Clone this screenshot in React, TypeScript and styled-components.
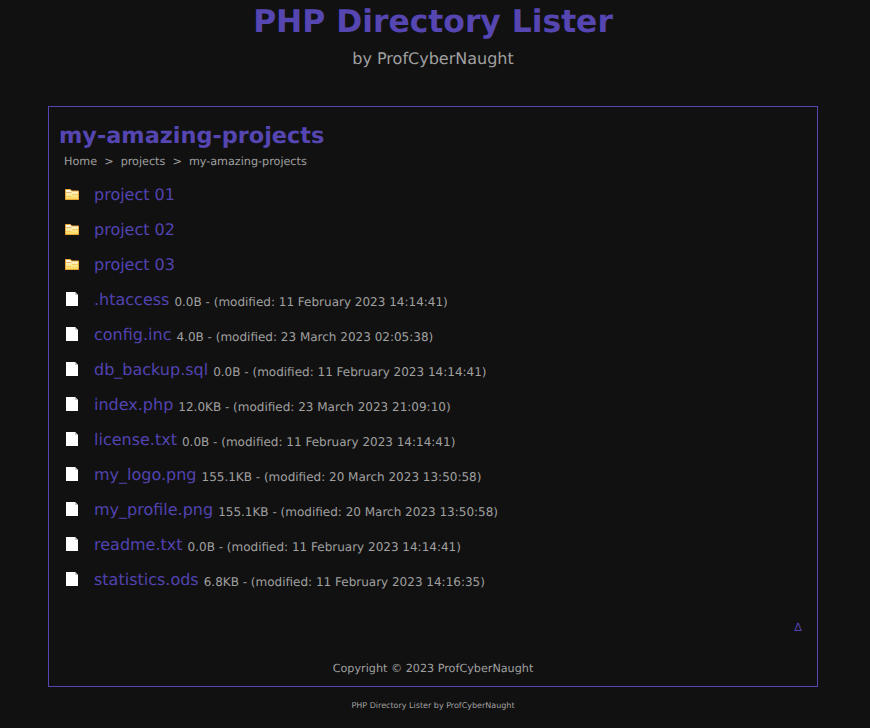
import React from "react";
import styled, { createGlobalStyle } from "styled-components";

const Global = createGlobalStyle`
  html, body { margin: 0; padding: 0; background: #111111; }
  body { font-family: "DejaVu Sans", sans-serif; color: #a0a0a0; text-rendering: geometricPrecision; }
`;
const Page = styled.div`
  width: 770px;
  height: 728px;
  margin-left: 48px;
  overflow: hidden;
  opacity: 0.999;
`;
const Title = styled.h1`
  margin: 0;
  padding-top: 3px;
  height: 39px;
  line-height: 39px;
  font-size: 31.36px;
  font-weight: 700;
  color: #5546b2;
  text-align: center;
`;
const Byline = styled.p`
  margin: 0;
  padding-top: 7px;
  height: 57px;
  line-height: 20px;
  font-size: 16px;
  text-align: center;
`;
const Panel = styled.main`
  box-sizing: border-box;
  height: 581px;
  border: 1px solid #5546b2;
  padding: 16px 10px 0;
  display: flex;
  flex-direction: column;
`;
const Heading = styled.h2`
  margin: 0;
  height: 26px;
  line-height: 26px;
  font-size: 22.4px;
  font-weight: 700;
  color: #5546b2;
`;
const Crumbs = styled.nav`
  display: flex;
  gap: 7.12px;
  margin: 5px 0 0 5px;
  height: 16px;
  line-height: 16px;
  font-size: 11.2px;
`;
const List = styled.ul`
  list-style: none;
  margin: 7px 0 0 5px;
  padding: 0;
`;
const Row = styled.li`
  height: 35px;
  display: flex;
  align-items: center;
  white-space: pre;
`;
const IconBox = styled.span`
  width: 30px;
  height: 35px;
  box-sizing: border-box;
  padding-top: 9px;
  flex: none;
  display: flex;
  align-items: flex-start;
`;
const Link = styled.a`
  font-size: 16px;
  color: #5243b0;
  text-decoration: none;
`;
const Meta = styled.span`
  font-size: 12px;
  margin-left: 5px;
  padding-top: 5px;
`;
const TopLink = styled.a`
  align-self: flex-end;
  margin: 23px 5px 0 0;
  height: 16px;
  line-height: 16px;
  font-size: 11.2px;
  color: #5243b0;
  text-decoration: none;
`;
const Copyright = styled.p`
  margin: 25px 0 0;
  height: 16px;
  line-height: 16px;
  font-size: 11.2px;
  text-align: center;
`;
const Credit = styled.p`
  margin: 13px 0 0;
  height: 12px;
  line-height: 12px;
  font-size: 8px;
  text-align: center;
`;

const FolderIcon = () => (
  <svg width="16" height="16" viewBox="0 0 16 16" aria-hidden="true">
    <defs>
      <linearGradient id="folderFill" x1="0" y1="0" x2="0" y2="1">
        <stop offset="0" stopColor="#fffdf0" />
        <stop offset="1" stopColor="#fad650" />
      </linearGradient>
    </defs>
    <path d="M1.500 3.500h5l1 1.500h7v8.500h-13z" fill="url(#folderFill)" stroke="#e8a53a" />
    <path d="M2 6.500h5.500" stroke="#d9b57a" />
    <path d="M8 8.500h6M2 10.500h5" stroke="#f0cb66" />
  </svg>
);
const FileIcon = () => (
  <svg width="16" height="16" viewBox="0 0 16 16" aria-hidden="true">
    <path d="M2 1h9l3 3v11H2z" fill="#ffffff" />
    <path d="M11 1v3h3z" fill="#c8c8c8" />
  </svg>
);

const folders = ["project 01", "project 02", "project 03"];
const files = [
  [".htaccess", "0.0B - (modified: 11 February 2023 14:14:41)"],
  ["config.inc", "4.0B - (modified: 23 March 2023 02:05:38)"],
  ["db_backup.sql", "0.0B - (modified: 11 February 2023 14:14:41)"],
  ["index.php", "12.0KB - (modified: 23 March 2023 21:09:10)"],
  ["license.txt", "0.0B - (modified: 11 February 2023 14:14:41)"],
  ["my_logo.png", "155.1KB - (modified: 20 March 2023 13:50:58)"],
  ["my_profile.png", "155.1KB - (modified: 20 March 2023 13:50:58)"],
  ["readme.txt", "0.0B - (modified: 11 February 2023 14:14:41)"],
  ["statistics.ods", "6.8KB - (modified: 11 February 2023 14:16:35)"],
];

export default function App() {
  return (
    <>
      <Global />
      <Page>
        <Title>PHP Directory Lister</Title>
        <Byline>by ProfCyberNaught</Byline>
        <Panel>
          <Heading>my-amazing-projects</Heading>
          <Crumbs>
            <span>Home</span><span>&gt;</span><span>projects</span><span>&gt;</span><span>my-amazing-projects</span>
          </Crumbs>
          <List>
            {folders.map((f) => (
              <Row key={f}><IconBox><FolderIcon /></IconBox><Link href="#">{f}</Link></Row>
            ))}
            {files.map(([n, m]) => (
              <Row key={n}><IconBox><FileIcon /></IconBox><Link href="#">{n}</Link><Meta>{m}</Meta></Row>
            ))}
          </List>
          <TopLink href="#">Δ</TopLink>
          <Copyright>Copyright © 2023 ProfCyberNaught</Copyright>
        </Panel>
        <Credit>PHP Directory Lister by ProfCyberNaught</Credit>
      </Page>
    </>
  );
}
